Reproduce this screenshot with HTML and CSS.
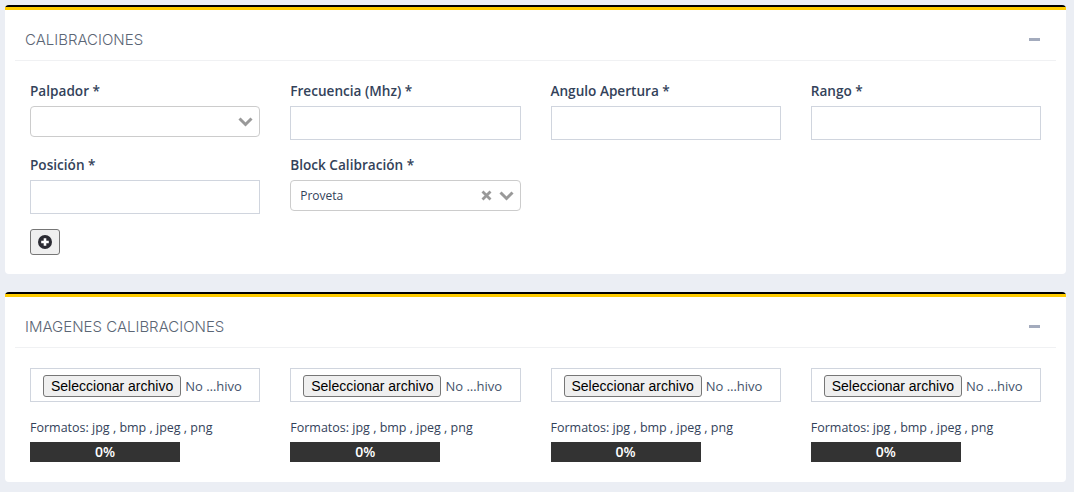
FILE: index.html
```html
<!DOCTYPE html>
<html lang="es">
<head>
  <meta charset="UTF-8">
  <title>Calibraciones</title>
  <link rel="stylesheet" href="styles.css">
</head>
<body>
  <section class="panel panel-calibraciones">
    <div class="panel-head">
      <h3 class="panel-title">CALIBRACIONES</h3>
      <span class="panel-toggle"></span>
    </div>
    <div class="field-grid">
      <div class="field">
        <label class="field-label">Palpador *</label>
        <div class="select">
          <span class="select-value"></span>
          <svg class="select-arrow" viewBox="0 0 15 10"><path d="M1.500 1.500 7.500 7.500l6-6"/></svg>
        </div>
      </div>
      <div class="field">
        <label class="field-label">Frecuencia (Mhz) *</label>
        <input class="text-input" type="text">
      </div>
      <div class="field">
        <label class="field-label">Angulo Apertura *</label>
        <input class="text-input" type="text">
      </div>
      <div class="field">
        <label class="field-label">Rango *</label>
        <input class="text-input" type="text">
      </div>
      <div class="field">
        <label class="field-label">Posición *</label>
        <input class="text-input" type="text">
      </div>
      <div class="field">
        <label class="field-label">Block Calibración *</label>
        <div class="select select-short">
          <span class="select-value">Proveta</span>
          <svg class="select-clear" viewBox="0 0 11 11"><path d="M1.500 1.500l8 8M9.500 1.500l-8 8"/></svg>
          <svg class="select-arrow" viewBox="0 0 15 10"><path d="M1.500 1.500 7.500 7.500l6-6"/></svg>
        </div>
      </div>
    </div>
    <button class="btn-add" type="button">
      <svg viewBox="0 0 14 14"><circle cx="7" cy="7" r="7"/><path d="M7 3.200v7.600M3.200 7h7.600"/></svg>
    </button>
  </section>

  <section class="panel panel-imagenes">
    <div class="panel-head">
      <h3 class="panel-title">IMAGENES CALIBRACIONES</h3>
      <span class="panel-toggle"></span>
    </div>
    <div class="upload-grid">
      <div class="upload">
        <div class="file-box"><button class="file-btn" type="button">Seleccionar archivo</button><span class="file-name">No …hivo</span></div>
        <p class="formats">Formatos: jpg , bmp , jpeg , png</p>
        <div class="progress">0%</div>
      </div>
      <div class="upload">
        <div class="file-box"><button class="file-btn" type="button">Seleccionar archivo</button><span class="file-name">No …hivo</span></div>
        <p class="formats">Formatos: jpg , bmp , jpeg , png</p>
        <div class="progress">0%</div>
      </div>
      <div class="upload">
        <div class="file-box"><button class="file-btn" type="button">Seleccionar archivo</button><span class="file-name">No …hivo</span></div>
        <p class="formats">Formatos: jpg , bmp , jpeg , png</p>
        <div class="progress">0%</div>
      </div>
      <div class="upload">
        <div class="file-box"><button class="file-btn" type="button">Seleccionar archivo</button><span class="file-name">No …hivo</span></div>
        <p class="formats">Formatos: jpg , bmp , jpeg , png</p>
        <div class="progress">0%</div>
      </div>
    </div>
  </section>
</body>
</html>
```

FILE: styles.css
```css
* { box-sizing: border-box; }

body {
  margin: 0;
  padding: 5px 8px 10px 5px;
  background: #ebeef4;
  color: #33425a;
  font-family: "Open Sans", "Liberation Sans", sans-serif;
  font-size: 13px;
}

.panel {
  background: #fff;
  border-top: 2px solid #000;
  border-radius: 4px;
  padding: 3px 10px 0;
}
.panel::before {
  content: "";
  display: block;
  height: 3px;
  margin: -3px -10px 0;
  background: #ffcc00;
}

.panel-calibraciones { height: 269px; margin-bottom: 18px; }
.panel-imagenes { height: 190px; }

.panel-head {
  height: 51px;
  display: flex;
  align-items: center;
  justify-content: space-between;
  padding: 9px 16px 0 10px;
  border-bottom: 1px solid #f0f1f3;
}
.panel-title {
  margin: 0;
  font-family: "Inter", "Liberation Sans", sans-serif;
  font-size: 15px;
  font-weight: 300;
  color: #5b6675;
}
.panel-toggle {
  width: 11px;
  height: 3px;
  background: #a3abbd;
}

.field-grid,
.upload-grid {
  display: grid;
  grid-template-columns: repeat(4, 1fr);
  column-gap: 30px;
  padding: 20px 15px 0;
}
.field-grid { row-gap: 15px; }

.field-label {
  display: block;
  height: 25px;
  font-size: 13.600px;
  font-weight: 600;
  line-height: 20px;
  color: #33425a;
}

.text-input {
  display: block;
  width: 100%;
  height: 34px;
  border: 1px solid #d0d5de;
  background: #fff;
}

.select {
  display: flex;
  align-items: center;
  height: 31px;
  padding: 0 6px 0 9px;
  border: 1px solid #ccc;
  border-radius: 4px;
  font-size: 12px;
}
.select-value { flex: 1; }
.select-arrow {
  width: 15px;
  height: 10px;
  fill: none;
  stroke: #999;
  stroke-width: 3;
}
.select-clear {
  width: 11px;
  height: 11px;
  margin-right: 7px;
  fill: none;
  stroke: #999;
  stroke-width: 2.800;
}

.btn-add {
  display: flex;
  align-items: center;
  justify-content: center;
  width: 30px;
  height: 26px;
  margin: 15px 0 0 15px;
  padding: 0;
  background: #efefef;
  border: 1px solid #767676;
  border-radius: 3px;
}
.btn-add svg { width: 14px; height: 14px; }
.btn-add circle { fill: #2b2b33; }
.btn-add path { stroke: #fff; stroke-width: 2.600; fill: none; }

.file-box {
  display: flex;
  align-items: center;
  height: 34px;
  padding: 1px 0 0 12px;
  border: 1px solid #d0d5de;
}
.file-btn {
  height: 22px;
  padding: 0 7px;
  background: #efefef;
  border: 1px solid #767676;
  border-radius: 3px;
  color: #000;
  font-family: "Liberation Sans", Arial, sans-serif;
  font-size: 14px;
  white-space: nowrap;
}
.file-name {
  margin-left: 4px;
  font-size: 13px;
  color: #44536b;
}

.formats {
  margin: 17px 0 0;
  height: 23px;
  font-size: 12.500px;
  line-height: 18px;
}

.progress {
  width: 150px;
  height: 20px;
  background: #333;
  color: #fff;
  font-size: 14px;
  font-weight: 600;
  line-height: 20px;
  text-align: center;
}
```
